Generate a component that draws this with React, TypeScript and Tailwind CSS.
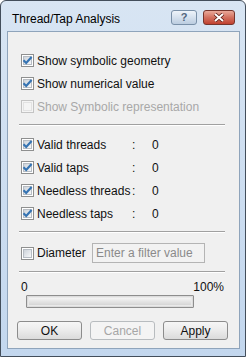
import type { ReactNode } from 'react';

type CheckProps = {
  checked?: boolean;
  disabled?: boolean;
};

// Win7-style 13px checkbox
const Checkbox = ({ checked, disabled }: CheckProps) => (
  <div
    className={`w-[13px] h-[13px] shrink-0 border flex items-center justify-center ${
      disabled ? 'border-[#c4c4c4] bg-[#f4f4f4]' : 'border-[#8e8f8f] bg-white'
    }`}
  >
    <div
      className={`w-[9px] h-[9px] flex items-center justify-center ${
        disabled
          ? 'bg-[#f4f4f4] border border-[#e2e2e2]'
          : 'bg-gradient-to-br from-[#cdd3da] to-[#f7f8f9] border border-[#b6bcc3]'
      }`}
    >
      {checked && (
        <svg width="11" height="11" viewBox="0 0 11 11" className="shrink-0">
          <path d="M1.5 5.2 L4.2 8 L9.6 2" fill="none" stroke="#3674b3" strokeWidth="2.2" />
        </svg>
      )}
    </div>
  </div>
);

const Row = ({ children }: { children: ReactNode }) => (
  <div className="h-[23px] flex items-center pl-[13px]">{children}</div>
);

const OptionRow = ({ label, checked, disabled }: { label: string } & CheckProps) => (
  <Row>
    <Checkbox checked={checked} disabled={disabled} />
    <span className={`ml-[3px] ${disabled ? 'text-[#a8a8a8]' : ''}`}>{label}</span>
  </Row>
);

const CountRow = ({ label, value }: { label: string; value: number }) => (
  <Row>
    <Checkbox checked />
    <span className="ml-[3px] w-[95px]">{label}</span>
    <span className="w-[20px]">:</span>
    <span>{value}</span>
  </Row>
);

const Separator = ({ className = '' }: { className?: string }) => (
  <div className={`ml-[11px] w-[206px] ${className}`}>
    <div className="h-px bg-[#a0a0a0]" />
    <div className="h-px bg-white" />
  </div>
);

const counts = [
  { label: 'Valid threads', value: 0 },
  { label: 'Valid taps', value: 0 },
  { label: 'Needless threads', value: 0 },
  { label: 'Needless taps', value: 0 },
];

const DialogButton = ({ label, disabled }: { label: string; disabled?: boolean }) => (
  <button
    disabled={disabled}
    className={`w-[65px] h-[19px] rounded-[3px] border leading-none ${
      disabled
        ? 'border-[#b8bcbf] bg-[#f4f4f4] text-[#a6a6a6]'
        : 'border-[#8c8c8c] bg-gradient-to-b from-[#f6f6f6] via-[#ebebeb] to-[#dbdbdb] text-[#111]'
    }`}
  >
    {label}
  </button>
);

export default function App() {
  return (
    <div className="w-[246px] h-[357px] rounded-t-[6px] border border-[#434e5b] bg-gradient-to-b from-[#d8e5f3] to-[#c3d7ee] flex flex-col font-['Liberation_Sans',Arial,sans-serif] text-[12px] text-[#111] select-none">
      {/* Title bar */}
      <div className="h-[30px] flex items-start shrink-0">
        <span className="mt-[11px] ml-[11px] leading-[14px] text-black">Thread/Tap Analysis</span>
        <div className="ml-auto mr-[10px] mt-[9px] flex gap-[6px]">
          <div className="w-[26px] h-[15px] rounded-[3px] border border-[#7990a8] bg-gradient-to-b from-[#eef4fa] via-[#d5e1ee] to-[#bccde0] flex items-center justify-center">
            <span className="text-[11px] leading-none font-bold text-[#51667d]">?</span>
          </div>
          <div className="w-[32px] h-[15px] rounded-[3px] border border-[#76352c] bg-gradient-to-b from-[#e9a99a] via-[#d2705f] to-[#c0402f] flex items-center justify-center">
            <svg width="12" height="9" viewBox="0 0 12 9">
              <path d="M2 1 L10 8 M10 1 L2 8" stroke="#5c1d16" strokeWidth="3.6" />
              <path d="M2 1 L10 8 M10 1 L2 8" stroke="#ffffff" strokeWidth="2" />
            </svg>
          </div>
        </div>
      </div>

      {/* Client area */}
      <div className="flex-1 ml-[6px] mr-[5px] mb-[7px] border border-[#8fa4bb] bg-[#f0f0f0] flex flex-col pt-[17px]">
        <OptionRow label="Show symbolic geometry" checked />
        <OptionRow label="Show numerical value" checked />
        <OptionRow label="Show Symbolic representation" disabled />

        <Separator className="mt-[6px]" />

        <div className="mt-[7px]">
          {counts.map((c) => (
            <CountRow key={c.label} label={c.label} value={c.value} />
          ))}
        </div>

        <Separator className="mt-[6px]" />

        <div className="mt-[9px] h-[22px] flex items-center pl-[13px]">
          <Checkbox />
          <span className="ml-[3px] w-[55px]">Diameter</span>
          <input
            readOnly
            placeholder="Enter a filter value"
            className="w-[113px] h-[20px] border border-[#b4b4b4] bg-[#f2f2f2] px-[3px] text-[12px] placeholder:text-[#8a8a8a] outline-none"
          />
        </div>

        <Separator className="mt-[7px]" />

        <div className="mt-[7px] h-[14px] leading-[14px] flex justify-between ml-[13px] w-[203px]">
          <span>0</span>
          <span>100%</span>
        </div>

        <div className="mt-[1px] ml-[18px] w-[168px] h-[13px] border border-[#8d8d8d] rounded-[1px] p-px bg-[#dcdcdc]">
          <div className="w-full h-full bg-gradient-to-b from-[#f4f4f4] via-[#e4e4e4] to-[#d6d6d6] border border-[#e9e9e9]" />
        </div>

        <div className="mt-[13px] ml-[9px] flex gap-[8px]">
          <DialogButton label="OK" />
          <DialogButton label="Cancel" disabled />
          <DialogButton label="Apply" />
        </div>
      </div>
    </div>
  );
}
